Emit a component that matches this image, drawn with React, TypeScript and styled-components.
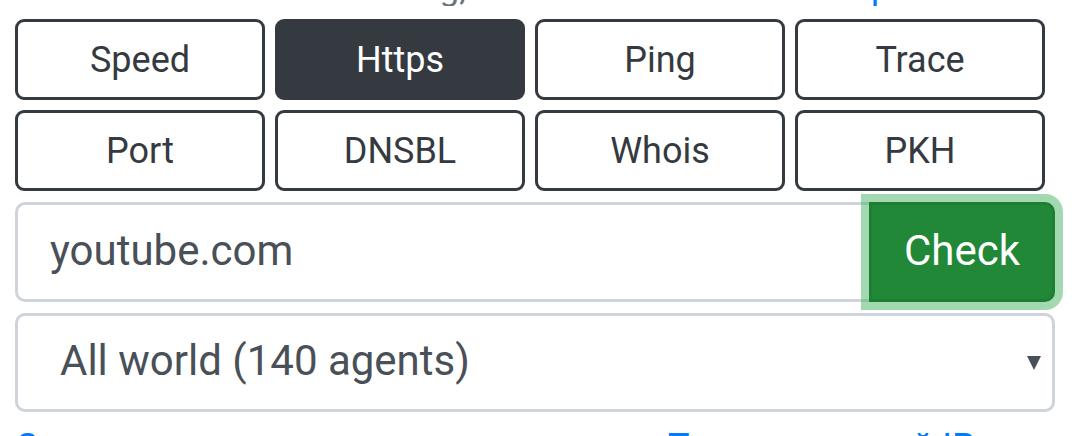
import React from "react";
import styled, { createGlobalStyle } from "styled-components";

const Global = createGlobalStyle`
  html, body { margin: 0; padding: 0; background: #fff; }
  body {
    width: 1080px;
    height: 436px;
    overflow: hidden;
    font-family: Roboto, "Noto Sans", "Liberation Sans", sans-serif;
    color: #212529;
  }
  * { box-sizing: border-box; }
`;

const Page = styled.div`
  padding: 0 25px 0 15px;
  display: flex;
  flex-direction: column;
`;

const Lead = styled.div`
  height: 6px;
  overflow: hidden;
  display: flex;
  align-items: flex-end;
  white-space: nowrap;
  font-size: 35px;
  line-height: 35px;
  color: #6c757d;
`;

const Link = styled.a`
  color: #007bff;
  text-decoration: none;
`;

const Tools = styled.div`
  margin-top: 13px;
  display: grid;
  grid-template-columns: repeat(4, 250px);
  column-gap: 10px;
  row-gap: 10px;
`;

const ToolButton = styled.button<{ $active?: boolean }>`
  height: 81px;
  border: 3px solid #343a40;
  border-radius: 9px;
  background: ${(p) => (p.$active ? "#343a40" : "#fff")};
  color: ${(p) => (p.$active ? "#fff" : "#343a40")};
  font-family: Roboto, "Noto Sans", sans-serif;
  font-size: 36px;
  font-weight: 400;
  padding: 0;
  display: flex;
  align-items: center;
  justify-content: center;
`;

const InputGroup = styled.div`
  margin-top: 11px;
  display: flex;
  height: 100px;
`;

const HostInput = styled.input`
  flex: 1;
  min-width: 0;
  height: 100%;
  border: 3px solid #ced4da;
  border-right: none;
  border-radius: 10px 0 0 10px;
  padding: 0 0 4px 32px;
  font-family: Roboto, "Noto Sans", sans-serif;
  font-size: 42px;
  color: #495057;
  outline: none;
`;

const CheckButton = styled.button`
  width: 186px;
  height: 100%;
  border: 3px solid #1e7e34;
  border-radius: 0 10px 10px 0;
  background: #218838;
  color: #fff;
  font-family: Roboto, "Noto Sans", sans-serif;
  font-size: 42px;
  padding: 0 0 4px;
  box-shadow: 0 0 0 8px rgba(72, 180, 97, 0.5);
  position: relative;
  z-index: 1;
`;

const SelectWrap = styled.div`
  margin-top: 11px;
  position: relative;
  height: 99px;
`;

const AgentSelect = styled.select`
  appearance: none;
  -webkit-appearance: none;
  width: 100%;
  height: 100%;
  border: 3px solid #ced4da;
  border-radius: 10px;
  background: #fff;
  padding: 0 60px 4px 42px;
  font-family: Roboto, "Noto Sans", sans-serif;
  font-size: 42px;
  color: #495057;
  outline: none;
`;

const Caret = styled.svg`
  position: absolute;
  right: 14px;
  top: 43px;
  width: 14px;
  height: 14px;
  pointer-events: none;
`;

const Footer = styled.div`
  margin-top: 14px;
  display: grid;
  grid-template-columns: 653px 1fr;
  font-size: 36px;
  line-height: 43px;
  white-space: nowrap;
`;

const tools = ["Speed", "Https", "Ping", "Trace", "Port", "DNSBL", "Whois", "PKH"];

export default function App() {
  return (
    <>
      <Global />
      <Page>
        <Lead>
          <span>Realtime website monitoring, it is an instrument to test&nbsp;</span>
          <Link href="#">ports</Link>
        </Lead>
        <Tools>
          {tools.map((t) => (
            <ToolButton key={t} $active={t === "Https"}>
              {t}
            </ToolButton>
          ))}
        </Tools>
        <InputGroup>
          <HostInput defaultValue="youtube.com" />
          <CheckButton>Check</CheckButton>
        </InputGroup>
        <SelectWrap>
          <AgentSelect defaultValue="all">
            <option value="all">All world (140 agents)</option>
          </AgentSelect>
          <Caret viewBox="0 0 14 14">
            <path d="M0 0 H14 L7 14 Z" fill="#495057" />
          </Caret>
        </SelectWrap>
        <Footer>
          <Link href="#">Сохранить ссылку</Link>
          <Link href="#">Тут узнать свой IP</Link>
        </Footer>
      </Page>
    </>
  );
}
